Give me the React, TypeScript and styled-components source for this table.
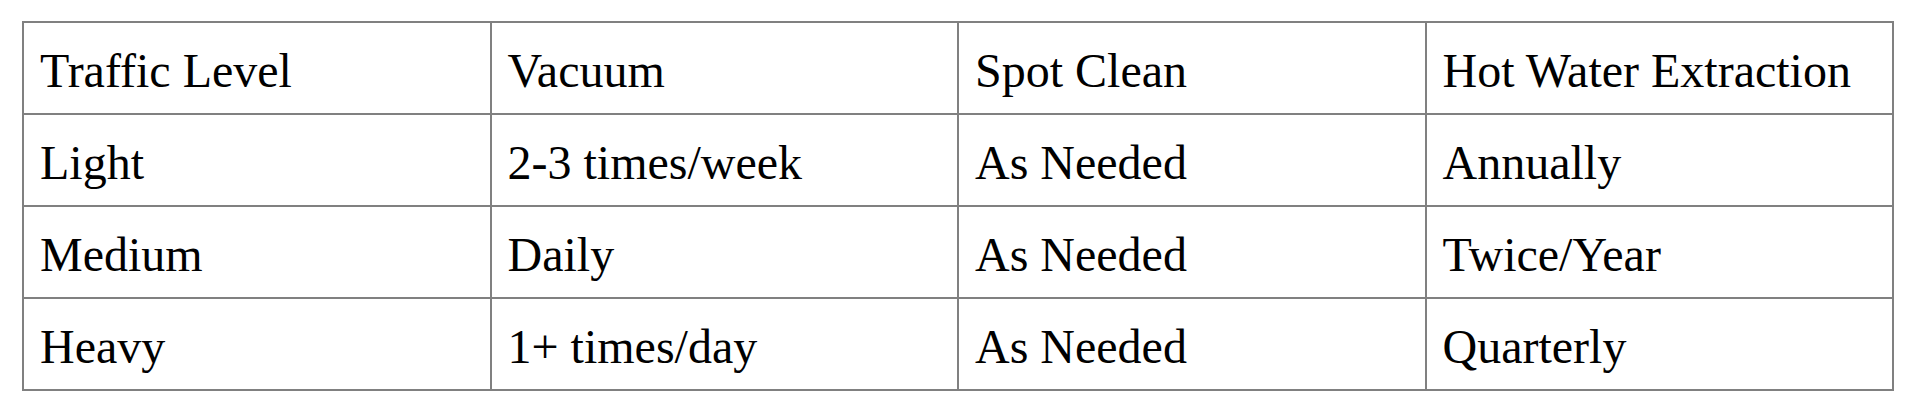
import React from 'react';
import styled, { createGlobalStyle } from 'styled-components';

const GlobalStyle = createGlobalStyle`
  html, body {
    margin: 0;
    padding: 0;
    background: #ffffff;
  }
  body {
    font-family: "Liberation Serif", "Times New Roman", serif;
    color: #000000;
  }
`;

const Page = styled.div`
  padding: 21px 0 0 22px;
`;

const Table = styled.table`
  border-collapse: collapse;
  table-layout: fixed;
  width: 1872px;
  border: 2px solid #808080;
`;

const Row = styled.tr`
  height: 92px;
`;

const Cell = styled.td`
  padding: 5px 16px 0 16px;
  border: 2px solid #808080;
  font-size: 48px;
  line-height: 55px;
  vertical-align: middle;
  text-align: left;
  white-space: nowrap;
  font-weight: normal;
`;

const rows = [
  ['Traffic Level', 'Vacuum', 'Spot Clean', 'Hot Water Extraction'],
  ['Light', '2-3 times/week', 'As Needed', 'Annually'],
  ['Medium', 'Daily', 'As Needed', 'Twice/Year'],
  ['Heavy', '1+ times/day', 'As Needed', 'Quarterly'],
];

export default function App() {
  return (
    <>
      <GlobalStyle />
      <Page>
        <Table>
          <tbody>
            {rows.map((row, i) => (
              <Row key={i}>
                {row.map((text, j) => (
                  <Cell key={j}>{text}</Cell>
                ))}
              </Row>
            ))}
          </tbody>
        </Table>
      </Page>
    </>
  );
}
